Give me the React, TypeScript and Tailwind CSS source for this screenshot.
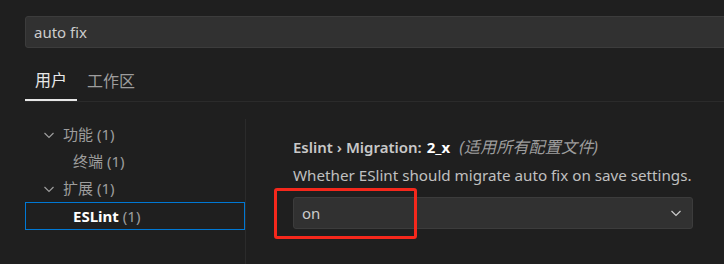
import React from "react";

function Chevron({ className }: { className?: string }) {
  return (
    <svg viewBox="0 0 16 16" width="16" height="16" className={className} fill="none" stroke="currentColor" strokeWidth="1.2">
      <path d="M3.5 6 L8 10.5 L12.5 6" />
    </svg>
  );
}

export default function App() {
  return (
    <div
      className="relative w-[724px] h-[264px] overflow-hidden bg-[#1f1f1f] pl-[25px] pt-[16px] text-[#cccccc] font-['Noto_Sans','Noto_Sans_CJK_SC',sans-serif]"
    >
      {/* search box */}
      <div className="h-[32px] w-[720px] rounded-[3px] border border-[#3c3c3c] bg-[#313131] flex items-center pl-[8px] text-[15px] text-[#cccccc]">
        auto fix
      </div>

      {/* tabs */}
      <div className="mt-[12px] flex h-[42px] border-b border-[#2b2b2b] w-[720px]">
        <div className="flex h-[41px] items-center border-b-2 border-[#e7e7e7] px-[10px] text-[16px] text-[#e7e7e7]">
          用户
        </div>
        <div className="flex h-[41px] items-center px-[10px] text-[16px] text-[#9d9d9d]">
          工作区
        </div>
      </div>

      {/* body */}
      <div className="mt-[17px] flex h-[200px]">
        <div className="w-[220px] pt-[2px] text-[15px]">
          <div className="flex h-[27px] items-center pl-[16px] text-[#9d9d9d]">
            <Chevron className="text-[#9d9d9d]" />
            <span className="ml-[6px]">功能 (1)</span>
          </div>
          <div className="flex h-[27px] items-center pl-[48px] text-[#9d9d9d]">
            终端 (1)
          </div>
          <div className="flex h-[27px] items-center pl-[16px] text-[#9d9d9d]">
            <Chevron className="text-[#9d9d9d]" />
            <span className="ml-[6px]">扩展 (1)</span>
          </div>
          <div className="flex h-[28px] items-center border border-[#0078d4] pl-[47px]">
            <span className="font-bold text-white">ESLint</span>
            <span className="ml-[4px] text-[#9d9d9d]">(1)</span>
          </div>
        </div>
        <div className="w-px bg-[#2b2b2b]" />
        <div className="flex-1 pl-[47px] pt-[18px]">
          <div className="flex h-[20px] items-center text-[15px]">
            <span className="font-semibold text-[#c8c8c8]">Eslint › Migration: </span>
            <span className="ml-[5px] font-bold text-white">2_x</span>
            <span className="ml-[9px] italic text-[16.2px] text-[#9d9d9d]">(适用所有配置文件)</span>
          </div>
          <div className="mt-[8px] h-[20px] flex items-center text-[15.2px] text-[#c0c0c0]">
            Whether ESlint should migrate auto fix on save settings.
          </div>
          <div className="mt-[12px] flex h-[32px] w-[400px] items-center justify-between rounded-[3px] border border-[#3c3c3c] bg-[#313131] pl-[8px] pr-[8px] text-[15px] text-[#cccccc]">
            <span>on</span>
            <Chevron className="text-[#cccccc]" />
          </div>
        </div>
      </div>

      {/* red annotation */}
      <div className="absolute left-[274px] top-[188px] h-[51px] w-[143px] rounded-[3px] border-[3px] border-[#f5281c]" />
    </div>
  );
}
